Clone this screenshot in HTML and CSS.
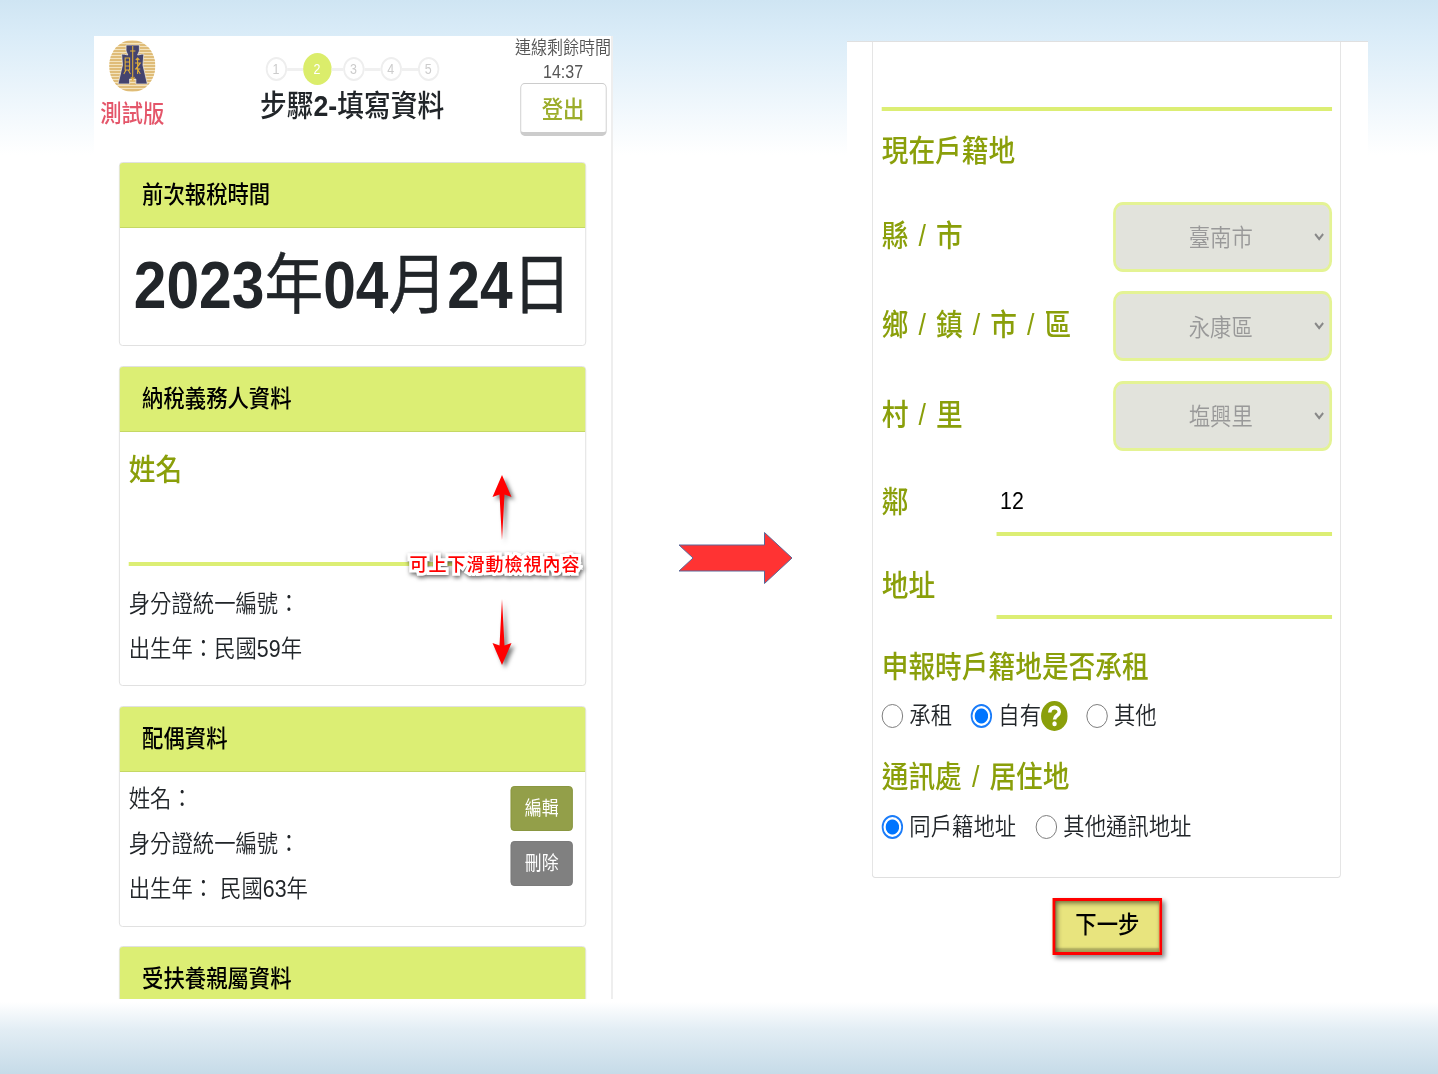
FILE: index.html
```html
<!DOCTYPE html>
<html lang="zh-Hant">
<head>
<meta charset="utf-8">
<title>步驟2-填寫資料</title>
<link rel="stylesheet" href="styles.css">
</head>
<body>
<main class="slide">
  <section class="phone phone-left">
    <div class="screen">
      <header class="top">
        <div class="brand">
          <svg class="logo" viewBox="0 0 52 52">
            <defs><clipPath id="disc"><circle cx="26" cy="26" r="26"/></clipPath></defs>
            <g clip-path="url(#disc)">
              <rect width="52" height="52" fill="#f3e3bd"/>
              <path d="M0 2H52M0 5H52M0 8H52M0 11H52M0 14H52M0 17H52M0 20H52M0 23H52M0 26H52M0 29H52M0 32H52M0 35H52M0 38H52M0 41H52M0 44H52M0 47H52M0 50H52" stroke="#d9b062" stroke-width="1.300"/>
            </g>
            <path d="M19 5H34V11L32 15Q37 14 39 14L38 25L43 44H30V39H23V44H10L15 25L14 14Q17 14 21 15L19 11Z" fill="#44446f" stroke="#f3ead6" stroke-width=".8"/>
            <g fill="none" stroke="#e2b03a" stroke-width="1.2">
              <path d="M26.500 6V39M23.500 11H29.500M24.500 37L26.500 40L28.500 37M18 18H23V30H18ZM18 22H23M18 26H23M19 30L16.500 34M21.500 30L24 34M32 18V34M29 23H35L30 29M29 29H35M32 29L35 34M30 20L32 18L34 20"/>
            </g>
          </svg>
          <span class="trial">測試版</span>
        </div>
        <div class="progress">
          <ol class="steps">
            <li class="step">1</li><li class="bar"></li>
            <li class="step current">2</li><li class="bar bar-short"></li>
            <li class="step">3</li><li class="bar"></li>
            <li class="step">4</li><li class="bar"></li>
            <li class="step">5</li>
          </ol>
          <h1 class="title">步驟<b>2-</b>填寫資料</h1>
        </div>
        <div class="session">
          <span class="timer">連線剩餘時間</span>
          <span class="timer">14:37</span>
          <button class="logout">登出</button>
        </div>
      </header>

      <section class="card card-date">
        <h2 class="card-head">前次報稅時間</h2>
        <p class="date">2023<span>年</span>04<span>月</span>24<span>日</span></p>
      </section>

      <section class="card card-payer">
        <h2 class="card-head">納稅義務人資料</h2>
        <div class="card-body">
          <h3 class="label">姓名</h3>
          <div class="name-line"></div>
          <p class="info">身分證統一編號：</p>
          <p class="info">出生年：民國59年</p>
        </div>
      </section>

      <section class="card card-spouse">
        <h2 class="card-head">配偶資料</h2>
        <div class="card-body spouse">
          <div>
            <p class="info">姓名：</p>
            <p class="info">身分證統一編號：</p>
            <p class="info">出生年： 民國63年</p>
          </div>
          <div class="actions">
            <button class="btn edit">編輯</button>
            <button class="btn delete">刪除</button>
          </div>
        </div>
      </section>

      <section class="card card-family">
        <h2 class="card-head">受扶養親屬資料</h2>
      </section>
    </div>
    <div class="hint">
      <svg class="hint-arrow" viewBox="0 0 20 66"><path d="M10 0L19.500 22L12.500 19.500L10 65L7.500 19.500L.5 22Z" fill="#f00"/></svg>
      <span class="hint-text">可上下滑動檢視內容</span>
      <svg class="hint-arrow" viewBox="0 0 20 66"><path d="M10 66L19.500 44L12.500 46.500L10 0L7.500 46.500L.5 44Z" fill="#f00"/></svg>
    </div>
  </section>

  <svg class="flow-arrow" viewBox="0 0 116 54"><path d="M2 14H87.500V1.500L115 27L87.500 52.500V40H2L16 27Z" fill="#f33" stroke="#5b6798" stroke-width="1"/></svg>

  <section class="phone phone-right">
    <div class="screen">
      <section class="card form">
        <div class="blank-line"></div>
        <h3 class="label address-title">現在戶籍地</h3>
        <div class="select-row"><span class="label">縣 / 市</span><div class="select"><span>臺南市</span><svg viewBox="0 0 12 10"><path d="M1.500 2L6 7L10.500 2" fill="none" stroke="#888" stroke-width="2.200"/></svg></div></div>
        <div class="select-row"><span class="label">鄉 / 鎮 / 市 / 區</span><div class="select"><span>永康區</span><svg viewBox="0 0 12 10"><path d="M1.500 2L6 7L10.500 2" fill="none" stroke="#888" stroke-width="2.200"/></svg></div></div>
        <div class="select-row"><span class="label">村 / 里</span><div class="select"><span>塩興里</span><svg viewBox="0 0 12 10"><path d="M1.500 2L6 7L10.500 2" fill="none" stroke="#888" stroke-width="2.200"/></svg></div></div>
        <div class="field-row near"><span class="label">鄰</span><div class="field">12</div></div>
        <div class="field-row street"><span class="label">地址</span><div class="field"></div></div>
        <h3 class="label rent-title">申報時戶籍地是否承租</h3>
        <div class="radios rent">
          <span class="radio"><i class="dot"></i>承租</span>
          <span class="radio"><i class="dot on"></i>自有<svg class="help" viewBox="0 0 30 30"><circle cx="15" cy="15" r="15" fill="#8a9f0a"/><path d="M9.800 11.500C10 4.500 20.500 5 20.500 11C20.500 14.500 15.200 14.500 15.200 18.500" fill="none" stroke="#fff" stroke-width="4"/><circle cx="15.200" cy="22.800" r="2.500" fill="#fff"/></svg></span>
          <span class="radio"><i class="dot"></i>其他</span>
        </div>
        <h3 class="label mail-title">通訊處 / 居住地</h3>
        <div class="radios mail">
          <span class="radio"><i class="dot on"></i>同戶籍地址</span>
          <span class="radio"><i class="dot"></i>其他通訊地址</span>
        </div>
      </section>
      <button class="next">下一步</button>
    </div>
  </section>
</main>
</body>
</html>
```
FILE: styles.css
```css
* { box-sizing: border-box; margin: 0; padding: 0; }

body {
  width: 1438px;
  height: 1074px;
  overflow: hidden;
  font-family: "Liberation Sans", "Noto Sans CJK TC", sans-serif;
  color: #212529;
}

.slide {
  display: flex;
  align-items: flex-start;
  height: 1074px;
  padding: 36px 0 0 94px;
  background:
    linear-gradient(#cfe5f3 0, #daecf8 36px, #fff 155px, #fff 1002px, #e2edf4 1030px, #c6dbe8 1074px);
}

/* The phone screens are condensed horizontally. */
.phone { position: relative; background: #fff; }
.phone-left { width: 519px; height: 963px; overflow: hidden; border-right: 2px solid #eee; }
.phone-right { width: 521px; height: 957px; margin: 5px 0 0 54px; border-top: 1px solid #e0e0e0; }
.screen { width: 582px; transform: scaleX(.89); transform-origin: 0 0; }

h1, h2, h3 { font-weight: 500; }
button { font-family: inherit; display: block; }

.top { display: grid; grid-template-columns: 107px 366px 108px; height: 126px; }
.brand { display: flex; flex-direction: column; align-items: center; width: 72px; margin-left: 7px; padding-top: 4px; }
.logo { width: 52px; height: 52px; }
.trial { font-size: 24px; line-height: 30px; margin-top: 7px; color: #e4566a; font-weight: 500; white-space: nowrap; }

.progress { display: flex; flex-direction: column; align-items: center; padding-top: 17px; }
.steps { display: flex; align-items: center; list-style: none; height: 32px; }
.step { width: 24px; height: 24px; border: 2px solid #eee; border-radius: 50%; font-size: 14px; line-height: 20px; text-align: center; color: #ccc; }
.current { width: 32px; height: 32px; border: 0; background: #dbed6b; color: #fff; line-height: 32px; }
.bar { width: 18px; height: 3px; background: #f0f0f0; }
.bar-short { width: 13px; }
.title { font-size: 30px; line-height: 41px; white-space: nowrap; }

.session { display: flex; flex-direction: column; align-items: center; }
.timer { font-size: 18px; line-height: 24px; color: #555; font-weight: 350; white-space: nowrap; }
.logout { width: 97px; height: 53px; margin-top: -1px; padding-bottom: 2px; background: #fff; border: 1px solid #ccc; border-bottom: 4px solid #ccc; border-radius: 5px; font-size: 24px; font-weight: 500; color: #9cad2b; }

.card { width: 525px; margin-left: 28px; border: 1px solid #dfdfdf; border-radius: 4px; margin-bottom: 20px; }
.card-head { height: 65px; padding-left: 25px; font-size: 24px; line-height: 63px; color: #000; background: #dcee74; border-bottom: 1px solid #c5d864; border-radius: 3px 3px 0 0; }
.card-body { padding: 0 10px; }
.card-date { height: 184px; }
.card-payer { height: 320px; }
.card-spouse { height: 221px; margin-bottom: 19px; }
.card-family { height: 80px; }

.date { font-size: 66px; line-height: 114px; font-weight: 700; text-align: center; white-space: nowrap; }
.date span { font-weight: 400; -webkit-text-stroke: .5px; }
.label { font-size: 30px; line-height: 40px; font-weight: 500; color: #8a9f0a; white-space: nowrap; word-spacing: 3px; }
.card-payer .label { margin-top: 18px; }
.name-line { height: 76px; border-bottom: 4px solid #dcee74; }
.info { font-size: 24px; line-height: 45px; font-weight: 350; white-space: pre; }
.name-line + .info { margin-top: 15px; }
.spouse { display: flex; justify-content: space-between; padding-top: 4px; }
.actions { display: flex; flex-direction: column; gap: 10px; padding: 10px 4px 0 0; }
.btn { width: 70px; height: 45px; border: 1px solid #87943b; border-radius: 4px; color: #fff; font-size: 19px; padding-bottom: 5px; }
.edit { background: #939f49; }
.delete { background: #808080; border-color: #777; }

.hint { position: absolute; left: 315px; top: 439px; width: 186px; display: flex; flex-direction: column; align-items: center; }
.hint-arrow { width: 20px; height: 66px; overflow: visible; filter: drop-shadow(3px 3px 2px #0008); }
.hint-text { height: 58px; line-height: 48px; font-size: 18px; letter-spacing: 1px; font-weight: 500; white-space: nowrap; color: #f00; -webkit-text-stroke: 6px #fff; paint-order: stroke fill; filter: drop-shadow(1px 2px 2px #0009); margin-right: 14px; }

.flow-arrow { width: 116px; height: 54px; margin: 495px 0 0 64px; flex: none; }

.form { width: 527px; height: 836px; border-top: 0; border-radius: 0 0 4px 4px; padding: 0 9px 0 10px; }
.blank-line { height: 69px; border-bottom: 4px solid #dcee74; }
.address-title { line-height: 80px; margin-bottom: 1px; }
.select-row { display: flex; align-items: center; justify-content: space-between; height: 89.500px; }
.select-row .label { padding-bottom: 2px; }
.select { display: flex; align-items: center; width: 246px; height: 70px; padding: 0 5px 2px 46px; background: #e2e3dc; border: 3px solid #e4f394; border-radius: 11px; font-size: 24px; font-weight: 350; color: #999; }
.select span { flex: 1; text-align: center; padding-right: 32px; }
.select svg { width: 13px; height: 10px; margin-top: 2px; }
.field-row { display: flex; }
.near { height: 71px; margin-top: 4px; }
.near .label { line-height: 74px; }
.street { height: 83px; }
.street .label { line-height: 100px; }
.field-row .label { width: 129px; }
.field { flex: 1; border-bottom: 4px solid #dcee74; font-size: 24px; line-height: 72px; color: #000; padding-left: 4px; }
.rent-title { margin-top: 28px; }
.radios { display: flex; height: 40px; font-size: 24px; line-height: 34px; font-weight: 350; }
.rent { margin-top: 9px; gap: 21px; }
.radio { display: flex; align-items: center; white-space: nowrap; }
.mail-title { margin-top: 21px; }
.mail { margin-top: 10px; gap: 22px; }
.dot { width: 24px; height: 24px; margin-right: 7px; border: 1.500px solid #767676; border-radius: 50%; }
.on { border: 2px solid #1a7cf9; background: radial-gradient(circle, #0075ff 7px, #fff 8px); }
.help { width: 30px; height: 30px; }
.next { width: 123px; height: 57px; margin: 20px 0 0 231px; padding-bottom: 9px; font-size: 24px; font-weight: 500; color: #000; background: #e8e47e; border: 3px solid #f00; box-shadow: 3px 3px 5px #0007, inset 2px 2px 6px #0008, inset 0 -4px 2px #8a884c99; }
```
